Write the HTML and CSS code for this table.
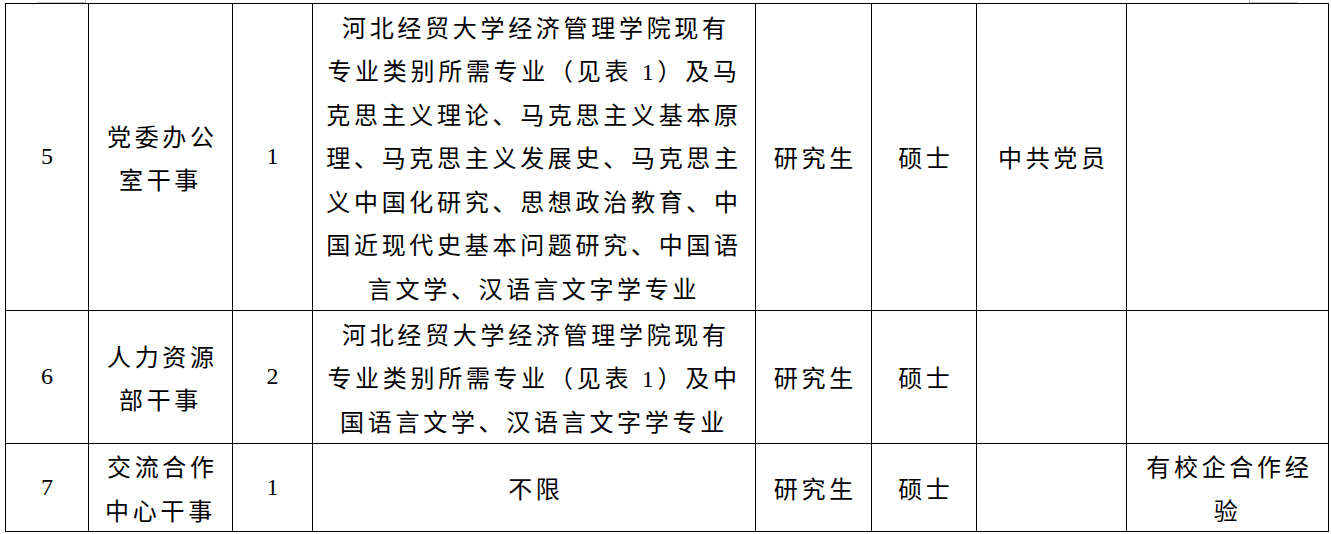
FILE: index.html
```html
<!DOCTYPE html>
<html lang="zh-CN">
<head>
<meta charset="utf-8">
<link rel="stylesheet" href="styles.css">
</head>
<body>
<div class="sheet">
  <span class="ghost ghost-left"></span>
  <span class="ghost ghost-right"></span>
  <table class="jobs">
    <colgroup>
      <col class="c1"><col class="c2"><col class="c3"><col class="c4">
      <col class="c5"><col class="c6"><col class="c7"><col class="c8">
    </colgroup>
    <tr class="r1">
      <td class="num">5</td>
      <td>党委办公<br>室干事</td>
      <td class="num">1</td>
      <td>河北经贸大学经济管理学院现有<br>专业类别所需专业（见表<span class="digit"> 1</span>）及马<br>克思主义理论、马克思主义基本原<br>理、马克思主义发展史、马克思主<br>义中国化研究、思想政治教育、中<br>国近现代史基本问题研究、中国语<br>言文学、汉语言文字学专业</td>
      <td>研究生</td>
      <td>硕士</td>
      <td>中共党员</td>
      <td></td>
    </tr>
    <tr class="r2">
      <td class="num">6</td>
      <td>人力资源<br>部干事</td>
      <td class="num">2</td>
      <td>河北经贸大学经济管理学院现有<br>专业类别所需专业（见表<span class="digit"> 1</span>）及中<br>国语言文学、汉语言文字学专业</td>
      <td>研究生</td>
      <td>硕士</td>
      <td></td>
      <td></td>
    </tr>
    <tr class="r3">
      <td class="num">7</td>
      <td>交流合作<br>中心干事</td>
      <td class="num">1</td>
      <td>不限</td>
      <td>研究生</td>
      <td>硕士</td>
      <td></td>
      <td>有校企合作经<br>验</td>
    </tr>
  </table>
</div>
</body>
</html>
```

FILE: styles.css
```css
html, body {
  margin: 0;
  padding: 0;
  background: #ffffff;
}

.sheet {
  position: relative;
  padding: 3px 0 0 5px;
}

.ghost {
  position: absolute;
  top: 0;
  height: 2px;
  border-bottom: 1px solid #c8c8c8;
}

.ghost-left {
  left: 37px;
  width: 48px;
  border-right: 1px solid #c8c8c8;
}

.ghost-right {
  left: 1249px;
  width: 48px;
  border-left: 1px solid #c8c8c8;
}

.jobs {
  border-collapse: collapse;
  table-layout: fixed;
  width: 1323px;
  font-family: "Noto Sans CJK SC", "Noto Sans CJK JP", sans-serif;
  font-size: 24px;
  color: #000000;
}

.jobs td {
  border: 1px solid #000000;
  padding: 0;
  text-align: center;
  vertical-align: middle;
  line-height: 43.5px;
  letter-spacing: 3.7px;
  text-indent: 3.7px;
  white-space: nowrap;
  overflow: hidden;
}

.c1 { width: 83px; }
.c2 { width: 144px; }
.c3 { width: 80px; }
.c4 { width: 443px; }
.c5 { width: 116px; }
.c6 { width: 105px; }
.c7 { width: 150px; }
.c8 { width: 202px; }

.r1 { height: 307px; }
.r2 { height: 133px; }
.r3 { height: 88px; }

.jobs td.num {
  font-family: "Liberation Serif", "Times New Roman", serif;
  letter-spacing: 0;
  text-indent: 0;
}

.digit {
  font-family: "Liberation Serif", "Times New Roman", serif;
  line-height: 1;
  letter-spacing: 3.7px;
}
```
